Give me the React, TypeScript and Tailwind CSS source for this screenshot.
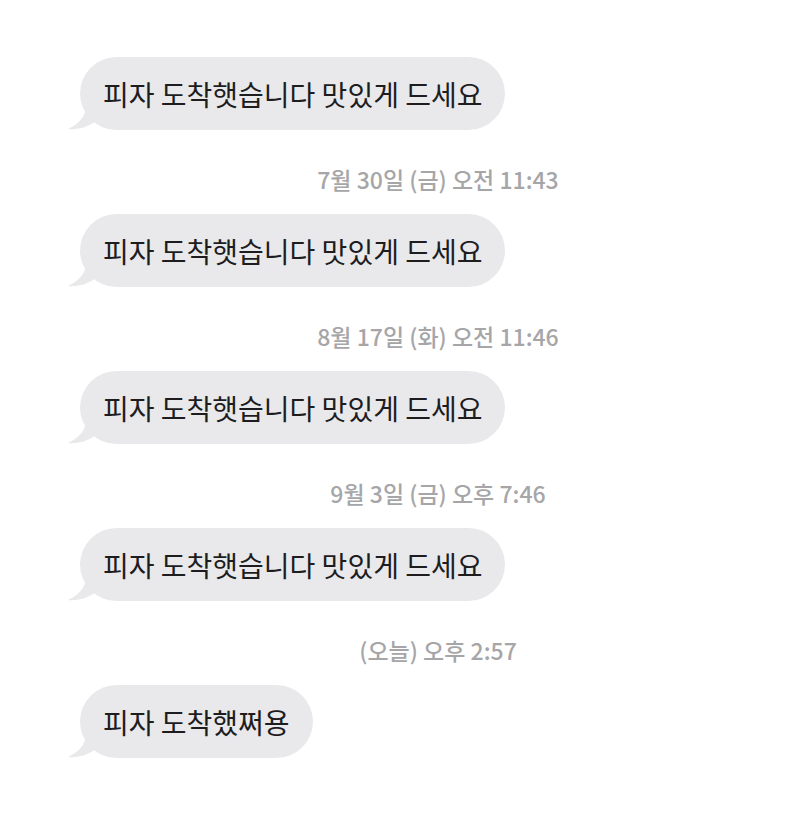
import React from 'react';

const messages = [
  { text: '피자 도착햇습니다 맛있게 드세요', time: '7월 30일 (금) 오전 11:43' },
  { text: '피자 도착햇습니다 맛있게 드세요', time: '8월 17일 (화) 오전 11:46' },
  { text: '피자 도착햇습니다 맛있게 드세요', time: '9월 3일 (금) 오후 7:46' },
  { text: '피자 도착햇습니다 맛있게 드세요', time: '(오늘) 오후 2:57' },
  { text: '피자 도착했쩌용', time: null },
];

const Bubble: React.FC<{ text: string }> = ({ text }) => (
  <div className="relative ml-[80px] self-start">
    {/* tail */}
    <svg className="absolute -left-[13px] bottom-0" width="34" height="30" viewBox="0 0 34 30">
      <path d="M20 0 C20 12 16 22 1 29 C11 30 22 27 30 20 L34 0 Z" fill="#e9e9eb" />
    </svg>
    <div className="relative flex h-[73px] items-center rounded-[37px] bg-[#e9e9eb] px-[23px] text-[28px] text-[#1d1d1f] font-['Noto_Sans_CJK_KR',sans-serif]">
      {text}
    </div>
  </div>
);

export default function App() {
  return (
    <div className="min-h-[817px] w-[800px] bg-white pt-[57px]">
      <div className="flex flex-col">
        {messages.map((m, i) => (
          <React.Fragment key={i}>
            <Bubble text={m.text} />
            {m.time && (
              <div className="mt-[35px] mb-[21px] pl-[76px] text-center text-[23px] leading-[28px] font-medium text-[#a6a6a8] font-['Noto_Sans_CJK_KR',sans-serif]">
                {m.time}
              </div>
            )}
          </React.Fragment>
        ))}
      </div>
    </div>
  );
}
